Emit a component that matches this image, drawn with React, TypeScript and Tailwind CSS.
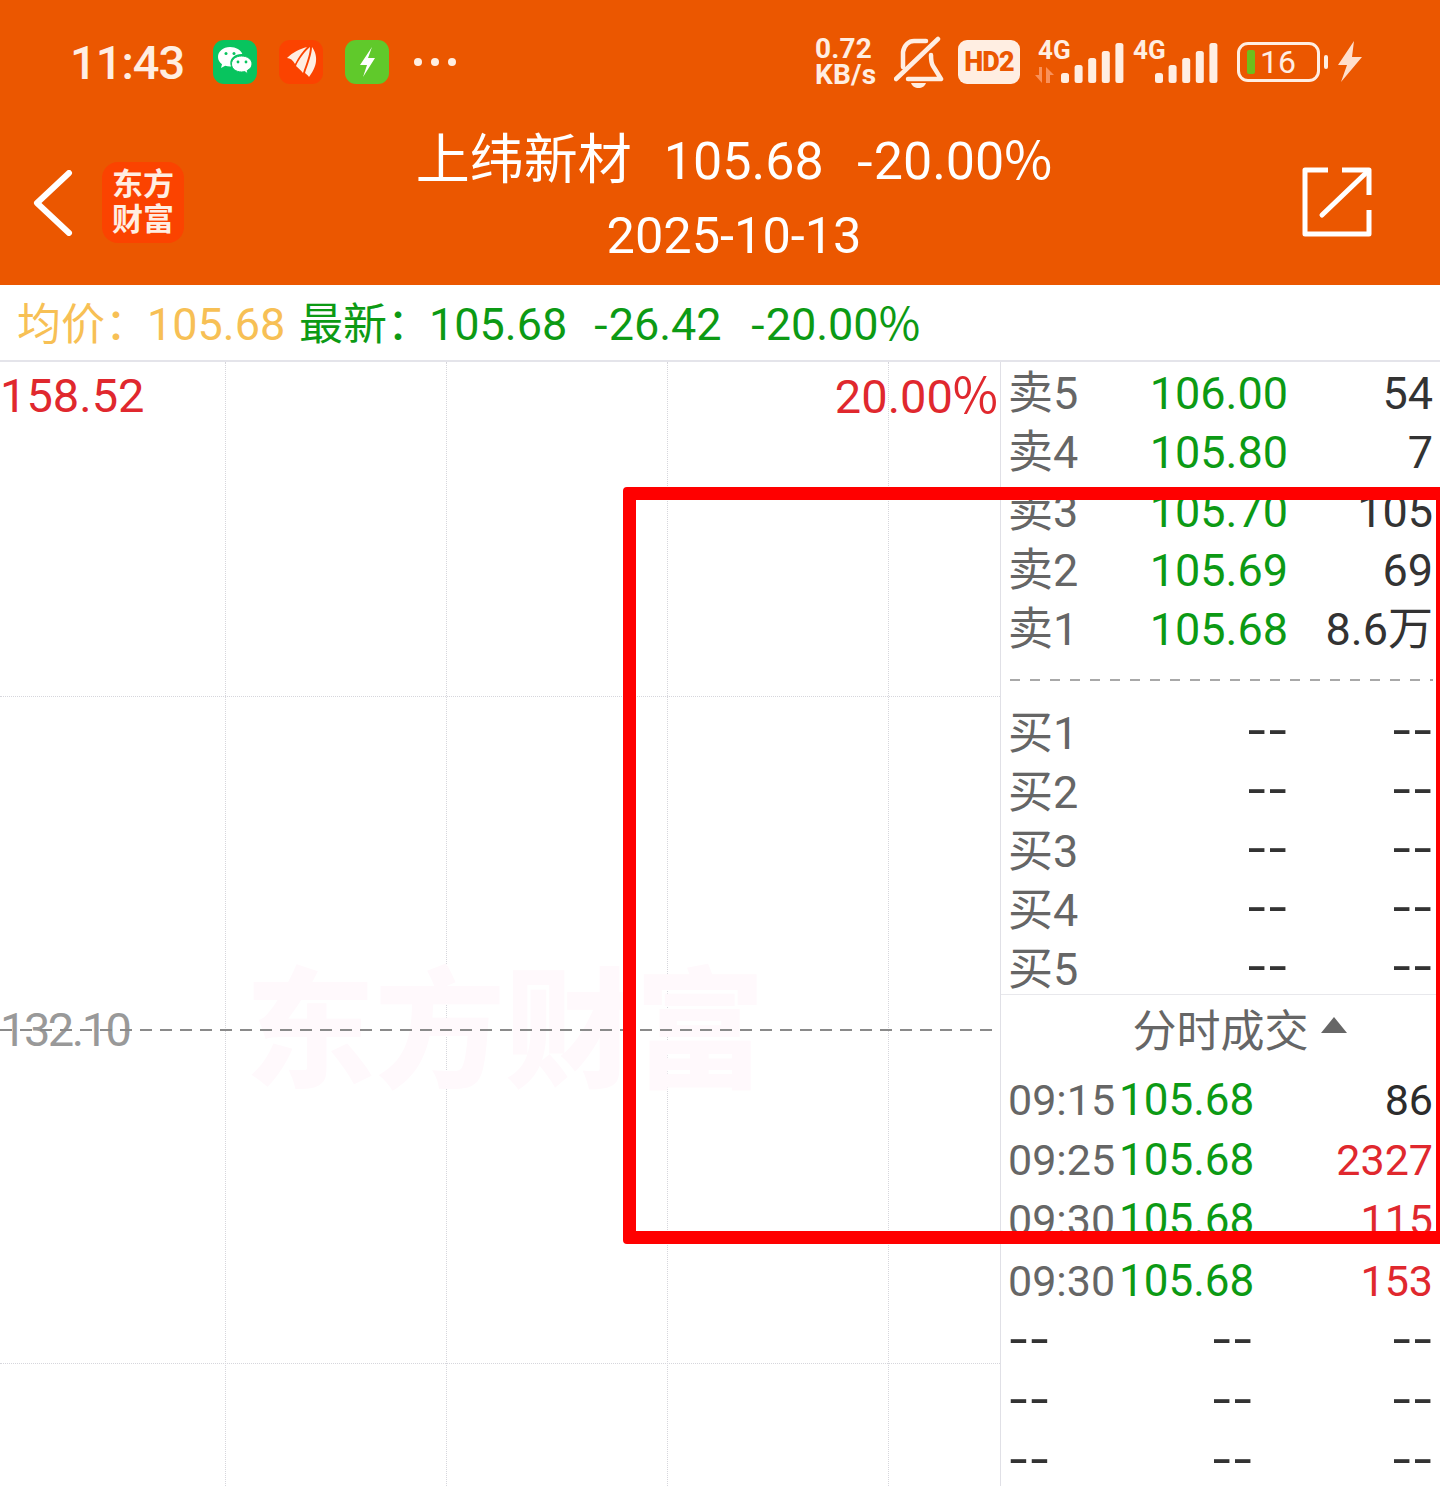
import React from "react";

const FONT = "font-['Roboto','Noto_Sans_CJK_SC',sans-serif]";
const CJK = "font-['Noto_Sans_CJK_SC',sans-serif]";
const ask = [
  ["卖5", "106.00", "54"],
  ["卖4", "105.80", "7"],
  ["卖3", "105.70", "105"],
  ["卖2", "105.69", "69"],
  ["卖1", "105.68", "8.6万"],
];
const bid = ["买1", "买2", "买3", "买4", "买5"];
const trades = [
  ["09:15", "105.68", "86", "text-[#2c2c2c]"],
  ["09:25", "105.68", "2327", "text-[#e0282e]"],
  ["09:30", "105.68", "115", "text-[#e0282e]"],
  ["09:30", "105.68", "153", "text-[#e0282e]"],
  ["--", "--", "--", "text-[#333333]"],
  ["--", "--", "--", "text-[#333333]"],
  ["--", "--", "--", "text-[#333333]"],
];

function Dash({ className, inner }: { className?: string; inner?: string }) {
  return (
    <span className={`text-[#333333] text-[45px] font-medium ${CJK} ${className ?? ""}`}>
      <span className={`inline-block scale-x-[1.3] ${inner ?? "origin-right"}`}>--</span>
    </span>
  );
}

function Signal({ arrows }: { arrows?: boolean }) {
  const x0 = arrows ? 26 : 23;
  const tops = [36, 28, 21, 14, 6];
  const w = arrows ? 90 : 86;
  return (
    <svg width={w} height="56" viewBox={`0 -3 ${w} 56`} fill="none">
      <text x={arrows ? 3 : 1} y="22" fontFamily="Roboto" fontWeight="700" fontSize="26" fill="#ffeee2">4G</text>
      {arrows && <path d="M7 30v16L0 38h4v-8zM11 30l8 8h-4v8h-4z" fill="#f9915a" />}
      {tops.map((t, i) => (
        <rect key={i} x={x0 + i * 13.6} y={t} width="8" height={46 - t} rx="2.500" fill="#ffeee2" />
      ))}
    </svg>
  );
}

function StatusBar() {
  return (
    <div className="flex items-center h-[124px] pl-[70px] pr-[78px] text-[#ffeee2]">
      <span className="text-[47px] font-medium leading-none tracking-[-1px] w-[143px]">11:43</span>
      <div className="w-[44px] h-[44px] rounded-[11px] bg-[#08c45e] flex items-center justify-center">
        <svg width="36" height="32" viewBox="0 0 36 32">
          <path d="M13 1C6 1 1 5.500 1 11c0 3 1.600 5.500 4 7.300L4 22l4.200-2.200c1.500.4 3 .7 4.800.7h1C13.500 19.500 13.300 18 13.300 17c0-5 4.700-9 11-9h1C24 4 19 1 13 1z" fill="#ffffff" />
          <path d="M24.500 10c-5.500 0-10 3.400-10 8s4.500 8 10 8c1.100 0 2.200-.2 3.200-.4L31 28l-.8-3.400c2.900-1.500 4.800-3.800 4.800-6.600 0-4.600-4.500-8-10.500-8z" fill="#ffffff" stroke="#08c45e" strokeWidth="1" />
          <circle cx="9" cy="7.500" r="1.500" fill="#08c45e" />
          <circle cx="17" cy="7.500" r="1.500" fill="#08c45e" />
          <circle cx="21" cy="16" r="1.400" fill="#08c45e" />
          <circle cx="29" cy="16" r="1.400" fill="#08c45e" />
        </svg>
      </div>
      <div className="ml-[22px] w-[44px] h-[44px] rounded-[11px] bg-[#fb4300]">
        <svg width="44" height="44" viewBox="0 0 44 44">
          <path d="M8 18C14 12 21 9 28 7 24 11 20 16 16 24 14 20 11 18 8 18Z" fill="#ffeee2" />
          <path d="M17 26C20 19 26 11 31 7 31 14 27 24 24 33 22 30 19 28 17 26Z" fill="#ffeee2" />
          <path d="M26 33C29 24 33 14 33 7 38 14 40 24 30 37 29 35 27 34 26 33Z" fill="#ffeee2" />
        </svg>
      </div>
      <div className="ml-[22px] w-[44px] h-[44px] rounded-[11px] bg-[#60c92b]">
        <svg width="44" height="44" viewBox="0 0 44 44">
          <path d="M27 7 15 25h7l-4 12 12-19h-7l4-11z" fill="#ffffff" />
        </svg>
      </div>
      <div className="ml-[25px] flex gap-[9px]">
        <span className="w-[8px] h-[8px] rounded-full bg-[#ffeee2]" />
        <span className="w-[8px] h-[8px] rounded-full bg-[#ffeee2]" />
        <span className="w-[8px] h-[8px] rounded-full bg-[#ffeee2]" />
      </div>
      <div className="ml-auto flex items-center">
        <div className="flex flex-col items-start text-[28px] font-bold leading-[26px] w-[66px] tracking-[0.2px]">
          <span>0.72</span>
          <span>KB/s</span>
        </div>
        <svg className="ml-[13px]" width="50" height="54" viewBox="0 0 50 54" fill="none" stroke="#ffeee2" strokeWidth="4.500" strokeLinecap="round" strokeLinejoin="round">
          <path d="M2 44 44 4" />
          <path d="M9 32V17C10 10 15 6 20 6h12" />
          <path d="M37 20c0 4 0 8 2 11s5 8 8 13H14" />
          <path d="M17 48c1 3 4 5 7.500 5s6.500-2 7.500-5z" fill="#ffeee2" stroke="none" />
        </svg>
        <div className="ml-[14px] w-[62px] h-[44px] rounded-[9px] bg-[#ffeee2] flex items-center justify-center">
          <span className="text-[27px] font-black text-[#eb5700] leading-none tracking-[-0.8px]">HD2</span>
        </div>
        <div className="ml-[15px]"><Signal arrows /></div>
        <div className="ml-[7px]"><Signal /></div>
        <div className="ml-[19px] w-[83px] h-[40px] rounded-[11px] border-[3px] border-[#ffeee2] flex items-center pl-[7px]">
          <span className="w-[8px] h-[24px] rounded-[2px] bg-[#6ebf1c]" />
          <span className="ml-[5px] text-[32px] font-normal leading-none text-[#ffeee2]">16</span>
        </div>
        <span className="ml-[4px] w-[4px] h-[14px] rounded-full bg-[#ffeee2]" />
        <svg className="ml-[10px]" width="24" height="42" viewBox="0 0 24 42">
          <path d="M16 0 0 24h9L3 41 24 16H14z" fill="#ffdfcc" />
        </svg>
      </div>
    </div>
  );
}

function NavBar() {
  return (
    <div className="flex h-[161px]">
      <div className="w-[190px] shrink-0 pl-[33px] flex items-start pt-[38px]">
        <svg className="mt-[8px]" width="40" height="66" viewBox="0 0 40 66" fill="none" stroke="#ffffff" strokeWidth="6" strokeLinecap="round" strokeLinejoin="round">
          <path d="M36 3 4 33l32 30" />
        </svg>
        <div className={`ml-[29px] w-[82px] h-[81px] rounded-[16px] bg-[#fb4300] flex items-center justify-center pb-[8px] text-[31px] font-bold leading-[35px] text-[#ffeee2] text-center ${CJK}`}>
          东方<br />财富
        </div>
      </div>
      <div className="flex-1 flex flex-col items-center text-white">
        <div className="flex items-baseline leading-[64px] whitespace-nowrap">
          <span className={`text-[54px] ${CJK}`}>上纬新材</span>
          <span className="text-[52px] ml-[32px]">105.68</span>
          <span className="text-[52px] ml-[32px]"><span className={CJK}>-</span>20.00<span className={CJK}>%</span></span>
        </div>
        <div className="text-[50.500px] leading-[84px]">2025-10-13</div>
      </div>
      <div className="w-[162px] shrink-0 pl-[24px] pt-[43px]">
        <svg width="70" height="70" viewBox="0 0 70 70" fill="none" stroke="#ffffff" strokeWidth="5" strokeLinecap="round">
          <path d="M26 3H3v64h64V43" strokeLinecap="butt" strokeLinejoin="round" />
          <path d="M40 3h27v25" strokeLinecap="butt" strokeLinejoin="round" />
          <path d="M20 48 65 5" />
        </svg>
      </div>
    </div>
  );
}

export default function App() {
  return (
    <div className={`relative w-[1440px] h-[1486px] overflow-hidden bg-white ${FONT}`}>
      <header className="bg-[#eb5700] h-[285px]">
        <StatusBar />
        <NavBar />
      </header>

      <div className="h-[77px] border-b-2 border-[#e4e4ea] flex items-center pl-[17px] text-[45px] leading-none whitespace-pre">
        <div className="flex items-baseline">
          <span className={`text-[#f7c055] text-[44px] w-[130px] ${CJK}`}>均价：</span>
          <span className="text-[#f7c055] w-[138px]">105.68</span>
          <span className={`text-[#0c9a14] text-[44px] ml-[14px] w-[130px] ${CJK}`}>最新：</span>
          <span className="text-[#0c9a14] w-[138px]">105.68</span>
          <span className="text-[#0c9a14] ml-[26px] w-[129px]"><span className={CJK}>-</span>26.42</span>
          <span className="text-[#0c9a14] ml-[28px]"><span className={CJK}>-</span>20.00<span className={CJK}>%</span></span>
        </div>
      </div>

      <div className="flex h-[1124px]">
        {/* chart */}
        <div className="relative w-[1000px] shrink-0">
          <div className="absolute top-0 bottom-0 left-[225px] border-l border-dotted border-[#d6d6dc]" />
          <div className="absolute top-0 bottom-0 left-[446px] border-l border-dotted border-[#d6d6dc]" />
          <div className="absolute top-0 bottom-0 left-[667px] border-l border-dotted border-[#d6d6dc]" />
          <div className="absolute top-0 bottom-0 left-[888px] border-l border-dotted border-[#d6d6dc]" />
          <div className="absolute left-0 right-0 top-[334px] border-t border-dotted border-[#d6d6dc]" />
          <div className="absolute left-0 right-0 top-[1001px] border-t border-dotted border-[#d6d6dc]" />

          <span className="absolute left-0 top-[6px] text-[47px] leading-[56px] text-[#e0282e]">158.52</span>
          <span className="absolute right-[2px] top-[5px] text-[47px] leading-[56px] text-[#e0282e]">20.00<span className={`text-[49px] leading-none ${CJK}`}>%</span></span>

          <span className={`absolute left-[245px] top-[578px] whitespace-nowrap text-[130px] leading-[160px] font-black text-[#fff9fc] ${CJK}`}>东方财富</span>
          <span className="absolute left-0 top-[640px] text-[47px] leading-[56px] text-[#999999] tracking-[-2.5px]">132.10</span>
          <div className="absolute left-0 w-[992px] top-[667px] h-[2px] bg-[repeating-linear-gradient(90deg,#8a8a8a_0_12px,transparent_12px_20px)]" />
        </div>

        {/* order book */}
        <div className="w-[440px] border-l border-[#e0e0e6] text-[45px] leading-[59px] pl-[7px] pr-[7px] flex flex-col">
          <div className="pt-[2px] shrink-0">
            {ask.map(([l, p, v]) => (
              <div key={l} className="flex h-[59px] items-center">
                <span className="text-[#666666] w-[100px]">{l}</span>
                <span className="text-[#0c9a14] w-[180px] text-right">{p}</span>
                <span className="text-[#333333] flex-1 text-right">{v}</span>
              </div>
            ))}
          </div>
          <div className="shrink-0 mt-[20px] ml-[2px] h-[2px] bg-[repeating-linear-gradient(90deg,#a8a8a8_0_10px,transparent_10px_20px)]" />
          <div className="shrink-0 mt-[23px]">
            {bid.map((l) => (
              <div key={l} className="flex h-[59px] items-center">
                <span className="text-[#666666] w-[100px]">{l}</span>
                <Dash className="w-[180px] text-right -translate-y-[8px]" />
                <Dash className="flex-1 text-right -translate-y-[8px]" />
              </div>
            ))}
          </div>
          <div className="shrink-0 -mx-[7px] mt-[-5px] border-t border-[#e8e8ec] h-[73px] flex items-center justify-center gap-[12px] pl-[38px] pb-[6px] text-[#666666] text-[44px]">
            <span className={CJK}>分时成交</span>
            <span className="w-0 h-0 border-x-[13px] border-x-transparent border-b-[16px] border-b-[#666666] mb-[6px]" />
          </div>
          <div className="shrink-0 mt-[3px] text-[43px]">
            {trades.map(([t, p, v, c], i) =>
              t === "--" ? (
                <div key={i} className="flex h-[60.300px] items-center">
                  <Dash className="w-[111px] -translate-y-[7px]" inner="origin-left" />
                  <Dash className="w-[134px] text-right -translate-y-[7px]" />
                  <Dash className="flex-1 text-right -translate-y-[7px]" />
                </div>
              ) : (
                <div key={i} className="flex h-[60.300px] items-center">
                  <span className="text-[#666666] w-[111px]">{t}</span>
                  <span className="text-[#0c9a14] text-[44px] w-[134px]">{p}</span>
                  <span className={`${c} flex-1 text-right`}>{v}</span>
                </div>
              )
            )}
          </div>
        </div>
      </div>

      {/* annotation */}
      <div className="absolute left-[623px] top-[487px] w-[830px] h-[757px] rounded-[4px] border-[13px] border-[#ff0000]" />
      <div className="absolute left-[1436px] top-[499px] w-[4px] h-[733px] bg-[#ff0000]" />
    </div>
  );
}
